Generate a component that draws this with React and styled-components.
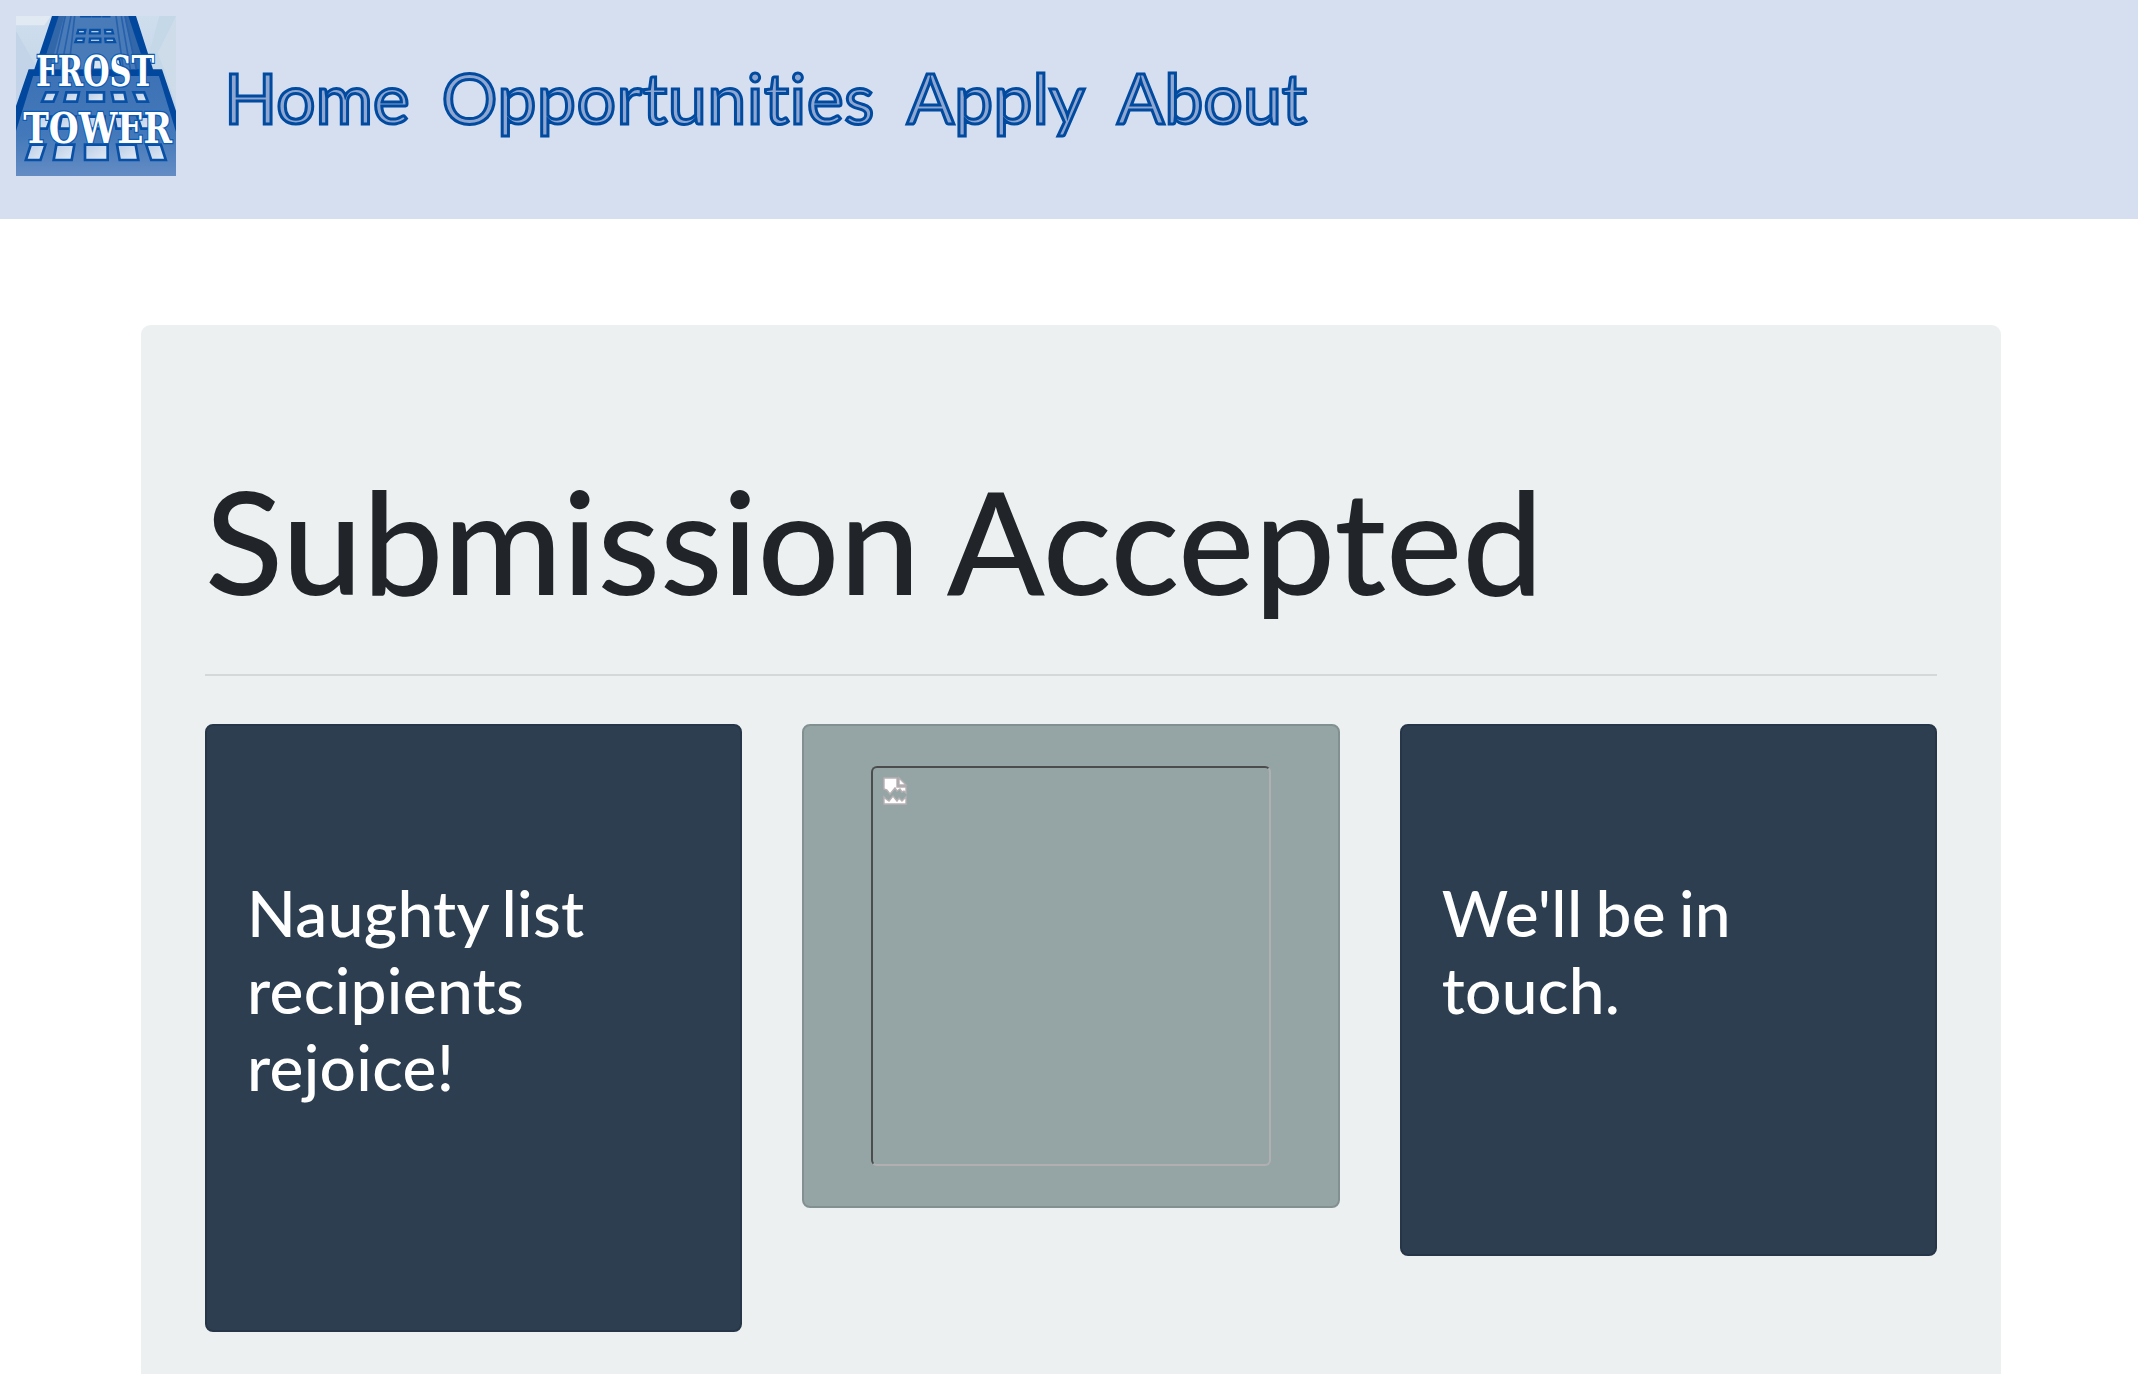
import React from "react";
import styled, { createGlobalStyle } from "styled-components";

const GlobalStyle = createGlobalStyle`
  *, *::before, *::after { box-sizing: border-box; }
  html, body { margin: 0; background: #fff; }
  body {
    font-family: Lato, "Liberation Sans", sans-serif;
    font-variant-ligatures: none;
    color: #212529;
  }
`;

const Page = styled.div`
  display: flex;
  flex-direction: column;
  height: 1374px;
`;

const Navbar = styled.nav`
  display: flex;
  flex: none;
  align-items: flex-start;
  height: 219px;
  padding: 16px;
  background: #d6dff0;
`;

const Brand = styled.a`
  display: block;
  width: 160px;
  height: 160px;
  margin-right: 32px;
  svg { display: block; overflow: visible; }
`;

const NavList = styled.ul`
  display: flex;
  list-style: none;
  margin: 0;
  padding: 37px 0 0;
`;

const NavLink = styled.a`
  display: block;
  padding: 0 16px;
  font-size: 70px;
  line-height: 88px;
  letter-spacing: ${(p) => p.$tracking}px;
  color: #8fa7d0;
  -webkit-text-stroke: 3px #004aa0;
`;

const Jumbotron = styled.main`
  flex: 1;
  width: 1860px;
  margin: 106px 0 0 141px;
  padding: 128px 64px 0;
  border-radius: 9.6px 9.6px 0 0;
  background: #ecf0f1;
`;

const Title = styled.h1`
  margin: 0;
  font-size: 144px;
  font-weight: 500;
  line-height: 173px;
  word-spacing: -5px;
`;

const Divider = styled.hr`
  margin: 48px 0;
  border: 0;
  border-top: 2px solid #d3d8d9;
`;

const CardRow = styled.div`
  display: grid;
  grid-template-columns: repeat(3, 1fr);
  column-gap: 60px;
  align-items: start;
`;

const Card = styled.section`
  border: 2px solid ${(p) => (p.$muted ? "#829091" : "#263648")};
  border-radius: 8px;
  background: ${(p) => (p.$muted ? "#95a5a5" : "#2c3e50")};
  color: #fff;
  padding: ${(p) => (p.$muted ? "40px" : "149px 40px 225px")};
`;

const CardText = styled.h3`
  margin: 0;
  font-size: 64px;
  font-weight: 500;
  line-height: 76.8px;
  letter-spacing: 0.3px;
  word-spacing: -3.5px;
`;

const Picture = styled.div`
  width: 400px;
  height: 400px;
  margin: 0 auto;
  padding: 8px 10px;
  border: 2px solid;
  border-color: #4c4c4c #b0b0b0 #b0b0b0 #4c4c4c;
  border-radius: 6px;
`;

const windowsRows = [
  { y: 229, h: 28, items: [[84, 34], [148, 38], [214, 50], [290, 38], [358, 32]] },
  { y: 302, h: 36, items: [[65, 34], [133, 42], [208, 58], [298, 42], [370, 34]] },
  { y: 386, h: 46, items: [[37, 44], [117, 54], [207, 68], [307, 56], [398, 44]] },
];

function TowerLogo() {
  return (
    <svg width="160" height="160" viewBox="0 0 480 480" role="img" aria-label="Frost Tower">
      <defs>
        <clipPath id="frame"><rect width="480" height="480" /></clipPath>
        <linearGradient id="sky" x1="0" y1="0" x2="0" y2="1">
          <stop offset="0" stopColor="#cfdeed" />
          <stop offset="1" stopColor="#b5cbe4" />
        </linearGradient>
        <linearGradient id="face" x1="0" y1="0" x2="0" y2="1">
          <stop offset="0" stopColor="#3d73b6" />
          <stop offset="0.6" stopColor="#4379ba" />
          <stop offset="1" stopColor="#648cc4" />
        </linearGradient>
        <linearGradient id="glass" x1="0" y1="0" x2="1" y2="1">
          <stop offset="0" stopColor="#b8cce6" />
          <stop offset="1" stopColor="#e4ecf6" />
        </linearGradient>
      </defs>
      <g clipPath="url(#frame)">
        <rect width="480" height="480" fill="url(#sky)" />
        <path d="M0 0H105L85 28H0Z" fill="#e1e9f3" />
        <path d="M0 45L60 150L20 220L0 240Z" fill="#c3d4e8" />
        <path d="M480 0H430L400 110L480 250Z" fill="#c5d8e8" />
        <path d="M425 110L480 0V270L445 160Z" fill="#d2deeb" opacity="0.7" />
        <path d="M108 0H360L411 160H438L480 285V480H0V270L38 160H55Z" fill="#00479d" />
        <path d="M128 0H337L390 160H76Z" fill="#3267aa" />
        <path d="M145 0H325L360 160H102Z" fill="#497bb9" />
        <path d="M148 0L112 160M165 0L135 160M176 0L158 160M300 0L322 160M316 0L343 160M327 0L361 160" stroke="#2861ab" strokeWidth="5" />
        <path d="M52 178H428L480 348V480H0V346Z" fill="url(#face)" />
        <path d="M38 162H438V180H38Z" fill="#00479d" />
        <g fill="#f0f5fb" stroke="#0750a5" strokeWidth="7">
          <path d="M198 -6H222V1H196ZM230 -6H253V1H230ZM262 -6H280V1H262Z" />
          <path d="M187 42H208L206 52H184ZM223 42H251V52H222ZM267 42H288L291 52H268Z" />
          <path d="M182 68H204L202 78H178ZM222 68H253V78H221ZM268 68H293L297 78H269Z" />
        </g>
        <path d="M234 132H258V160H231ZM287 130H310L316 160H290Z" fill="#d8e4f2" stroke="#0750a5" strokeWidth="5" />
        {windowsRows.map((row) =>
          row.items.map(([x, w]) => {
            const lean = (240 - (x + w / 2)) / 24;
            return (
              <path
                key={`${row.y}-${x}`}
                d={`M${x + lean} ${row.y}H${x + w + lean}L${x + w - lean} ${row.y + row.h}H${x - lean}Z`}
                fill="url(#glass)"
                stroke="#0750a5"
                strokeWidth="8"
              />
            );
          })
        )}
      </g>
      <g
        fill="#fff"
        stroke="#0c5cb4"
        strokeWidth="8"
        paintOrder="stroke"
        fontFamily="'DejaVu Serif', serif"
        fontWeight="700"
        fontSize="128"
      >
        <text x="60" y="210" textLength="355" lengthAdjust="spacingAndGlyphs">FROST</text>
        <text x="22" y="382" textLength="446" lengthAdjust="spacingAndGlyphs">TOWER</text>
      </g>
    </svg>
  );
}

function MissingPicture() {
  return (
    <svg width="28" height="32" viewBox="0 0 28 32" aria-hidden="true">
      <g fill="#fff" stroke="#b8b0b2" strokeWidth="1.4">
        <path d="M1 2H14V11H23V17L21 15L19 16L17 13L14 15L12 12L7 18L4 14L1 13Z" />
        <path d="M16 2L23 9H16Z" />
        <path d="M1 21L3 23L6 25L10 20L14 25L16 22L19 25L23 21V28H1Z" />
      </g>
    </svg>
  );
}

const links = [
  { label: "Home", tracking: -0.3 },
  { label: "Opportunities", tracking: 0.4 },
  { label: "Apply", tracking: 0 },
  { label: "About", tracking: -0.1 },
];

export default function App() {
  return (
    <Page>
      <GlobalStyle />
      <Navbar>
        <Brand><TowerLogo /></Brand>
        <NavList>
          {links.map(({ label, tracking }) => (
            <li key={label}><NavLink $tracking={tracking}>{label}</NavLink></li>
          ))}
        </NavList>
      </Navbar>
      <Jumbotron>
        <Title>Submission Accepted</Title>
        <Divider />
        <CardRow>
          <Card><CardText>Naughty list recipients rejoice!</CardText></Card>
          <Card $muted><Picture><MissingPicture /></Picture></Card>
          <Card><CardText>We'll be in touch.</CardText></Card>
        </CardRow>
      </Jumbotron>
    </Page>
  );
}
